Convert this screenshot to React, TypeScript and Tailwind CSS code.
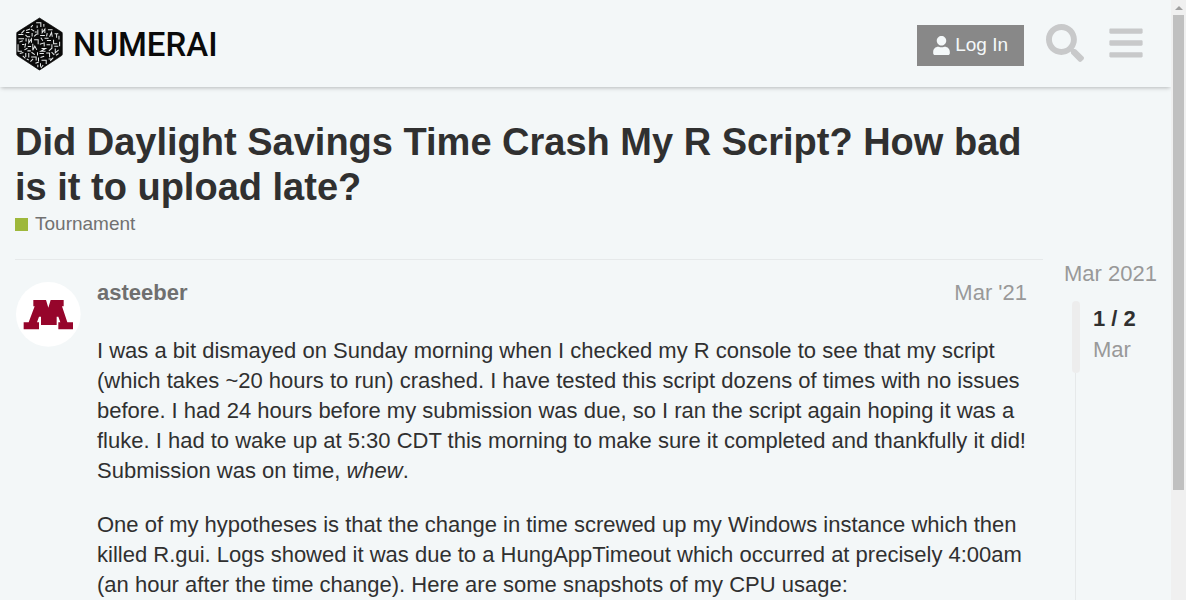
import { FaBars, FaSearch, FaUser } from "react-icons/fa";

function HexMark() {
  return (
    <svg viewBox="18 7 140 161" className="h-[54px] w-[47px]" aria-hidden="true">
      <path d="M88 10 L154 52 Q156 53 156 56 V118 Q156 121 154 122 L90 164 Q88 166 86 164 L22 122 Q20 121 20 118 V56 Q20 53 22 52 Z" fill="#0a0a0a" stroke="#0a0a0a" strokeWidth="2" />
      <g fill="none" stroke="#e8ebec" strokeWidth="3">
        <path d="M78 24H92V37M81 32V40M68 31L62 38M101 28V36M96 42V54L104 43V55M63 43L72 49M83 44V60M74 52H80M113 45H127M48 47L60 43M48 53H58M34 56L43 46M25 59H40M46 60L52 66H60M66 55V65M72 65L80 57M90 62H104M111 55L109 65M118 66L124 53L126 66M133 57H144M139 57V69M146 63V74" />
        <path d="M25 72H42M48 70V80M56 72V84L64 72V84M72 75H84V88M92 69L98 78M103 70H115M110 77H122M130 75V87H141M148 81V94M28 82L38 78M24 88V109H36M36 89H43M47 86L44 98M53 95H63M68 87V106L74 94L80 105M89 88L102 84V95M94 101H106L92 109H106M109 90H120M125 88V100L116 108M132 94H144M135 101V114L145 105" />
        <path d="M43 105L52 100M52 108H62M29 116L40 113M47 114V126M56 114V128M64 112L74 119M82 112V122M88 116H101M108 114H118V127M124 112L132 120M137 121L145 116M38 123L46 130M63 126H78V137M69 132L61 140M85 128V139M91 128L102 124M94 136H108V147M115 132H126M120 138L129 128M76 145L86 141M83 149V157M91 145V155M99 150L92 159M56 135L50 132" />
      </g>
    </svg>
  );
}

function Avatar() {
  return (
    <svg viewBox="0 0 195 195" className="h-[65px] w-[65px]" role="img" aria-label="asteeber">
      <circle cx="97" cy="97" r="97" fill="#fff" />
      <path d="M52 54H90L97 77L104 54H143V73H138L154 121H171V142H127V121H133L127 104H122V129H75V104H69L63 121H69V142H23V121H38L56 73H52Z" fill="#96052b" />
    </svg>
  );
}

function Header() {
  return (
    <header className="relative flex h-[87px] shrink-0 items-start justify-between pl-4 pr-[26px] shadow-[0_2px_4px_-1px_rgba(0,0,0,0.25)]">
      <a href="#home" className="flex items-center gap-2.5 pt-[17px] text-[#0a0a0a]">
        <HexMark />
        <span className="font-[Roboto,sans-serif] text-[33px] leading-none font-medium">NUMERAI</span>
      </a>
      <div className="flex items-start pt-6">
        <button className="mt-px flex h-[41px] items-center gap-[5px] bg-[#888] px-4 text-[19px] text-[#f4f8f9]">
          <FaUser className="h-[19px] w-[17px]" />
          Log In
        </button>
        <button aria-label="Search" className="ml-[22px] text-[#c8c9ca]">
          <FaSearch className="size-[38px]" />
        </button>
        <button aria-label="Menu" className="ml-[23px] text-[#c8c9ca]">
          <FaBars className="size-[38px]" />
        </button>
      </div>
    </header>
  );
}

function Post() {
  return (
    <article className="flex min-w-0 flex-1 gap-4 border-t border-[#e6e9ea] pt-[22px] pl-px">
      <a href="#asteeber" className="shrink-0"><Avatar /></a>
      <div className="min-w-0 flex-1 pr-4">
        <div className="flex items-center justify-between leading-[22px]">
          <a href="#asteeber" className="font-bold text-[#6f6f6f]">asteeber</a>
          <a href="#date" className="text-[#999]">Mar '21</a>
        </div>
        <div className="flex flex-col gap-6 pt-8 leading-[30px]">
          <p>
            I was a bit dismayed on Sunday morning when I checked my R console to see that my script (which takes ~20 hours to run) crashed. I have tested this script dozens of times with no issues before. I had 24 hours before my submission was due, so I ran the script again hoping it was a fluke. I had to wake up at 5:30 CDT this morning to make sure it completed and thankfully it did! Submission was on time, <em>whew</em>.
          </p>
          <p>
            One of my hypotheses is that the change in time screwed up my Windows instance which then killed R.gui. Logs showed it was due to a HungAppTimeout which occurred at precisely 4:00am (an hour after the time change). Here are some snapshots of my CPU usage:
          </p>
        </div>
      </div>
    </article>
  );
}

function Timeline() {
  return (
    <aside className="w-[107px] shrink-0 text-[#999]">
      <a href="#start" className="block leading-[30px]">Mar 2021</a>
      <div className="ml-2 flex pt-3">
        <div className="flex h-[320px] w-2 flex-col">
          <div className="h-[72px] w-2 shrink-0 rounded-sm bg-[#ededed]" />
          <div className="ml-[3px] w-px flex-1 bg-[#e6e9ea]" />
        </div>
        <div className="pl-[13px] pt-0.5 leading-[31px]">
          <div className="font-bold text-[#303030]">1 / 2</div>
          <div>Mar</div>
        </div>
      </div>
    </aside>
  );
}

export default function App() {
  return (
    <div className="flex h-screen overflow-hidden bg-[#f3f7f8] font-['Liberation_Sans',Arial,sans-serif] text-[22px] text-[#303030]">
      <div className="min-w-0 flex-1 overflow-hidden">
        <Header />
        <main className="pl-[15px]">
          <h1 className="pt-[33px] pr-32 text-[38px] leading-[45px] font-bold">
            Did Daylight Savings Time Crash My R Script? How bad is it to upload late?
          </h1>
          <a href="#tournament" className="flex items-center gap-[7px] pt-0.5 text-[19px] leading-6 text-[#717171]">
            <span className="size-[13px] bg-[#9eb83b]" />
            Tournament
          </a>
          <div className="flex gap-[21px] pt-[23px]">
            <Post />
            <Timeline />
          </div>
        </main>
      </div>
      <div className="flex w-[15px] shrink-0 flex-col items-center bg-[#f0f0f0]" aria-hidden="true">
        <div className="flex h-[15px] items-center">
          <svg viewBox="0 0 8 4" className="h-1 w-2"><path d="M0 4L4 0L8 4Z" fill="#a0a0a0" /></svg>
        </div>
        <div className="h-[475px] w-[11px] bg-[#c0c0c0]" />
      </div>
    </div>
  );
}
